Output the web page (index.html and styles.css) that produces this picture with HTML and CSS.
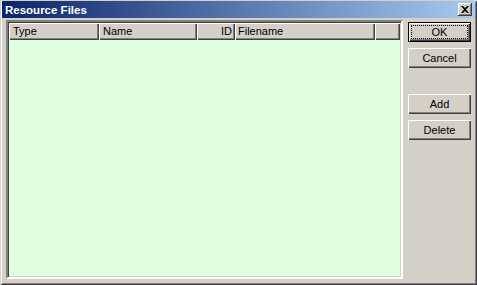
FILE: index.html
```html
<!DOCTYPE html>
<html lang="en">
<head>
  <meta charset="UTF-8" />
  <title>Resource Files</title>
  <link rel="stylesheet" href="styles.css">
</head>
<body>
<div class="window">
  <div class="titlebar">
    <span class="title">Resource Files</span>
    <span class="close">
      <svg width="8" height="7" viewBox="0 0 8 7"><path d="M0 0h2l2 2 2-2h2L5 3.5 8 7H6L4 5 2 7H0l3-3.5z" fill="#000"/></svg>
    </span>
  </div>
  <div class="content">
    <div class="list">
      <div class="header">
        <div class="col c-type">Type</div>
        <div class="col c-name">Name</div>
        <div class="col c-id">ID</div>
        <div class="col c-file">Filename</div>
        <div class="col c-rest"></div>
      </div>
      <div class="rows"></div>
    </div>
    <div class="buttons">
      <button class="btn default"><span class="focus">OK</span></button>
      <button class="btn">Cancel</button>
      <div class="spacer"></div>
      <button class="btn">Add</button>
      <button class="btn">Delete</button>
    </div>
  </div>
</div>
</body>
</html>
```

FILE: styles.css
```css
* {
  padding: 0;
  margin: 0;
  box-sizing: border-box;
}
body {
  background: #d4d0c8;
  font-family: "Liberation Sans", Arial, sans-serif;
  font-size: 11px;
}
.window {
  width: 477px;
  height: 285px;
  background: #d4d0c8;
  padding: 1px 2px 3px 2px;
  box-shadow: inset 1px 1px #d4d0c8, inset -1px -1px #404040,
    inset 2px 2px #fff, inset -2px -2px #808080;
  display: flex;
  flex-direction: column;
}
.titlebar {
  height: 17px;
  background: linear-gradient(to right, #0a246a, #a6caf0);
  display: flex;
  align-items: center;
  justify-content: space-between;
  padding: 0 3px 0 3px;
}
.title {
  color: #fff;
  font-weight: bold;
  font-size: 11.5px;
}
.close {
  width: 14px;
  height: 13px;
  background: #d4d0c8;
  box-shadow: inset -1px -1px #404040, inset 1px 1px #fff, inset -2px -2px #808080;
  display: flex;
  align-items: center;
  justify-content: center;
  padding-bottom: 1px;
}
.content {
  flex: 1;
  display: flex;
  padding: 2px 4px 3px 4px;
  gap: 5px;
}
.list {
  flex: 1;
  display: flex;
  flex-direction: column;
  background: #e0ffe0;
  border: 2px solid;
  border-color: #808080 #fff #fff #808080;
  box-shadow: inset 1px 1px #404040, inset -1px -1px #d4d0c8;
  padding: 1px;
}
.header {
  display: flex;
  height: 17px;
}
.col {
  background: #d4d0c8;
  box-shadow: inset 1px 1px #fff, inset -1px -1px #404040, inset -2px -2px #808080;
  padding: 2px 4px 0 4px;
  white-space: nowrap;
  overflow: hidden;
}
.c-type { width: 90px; }
.c-name { width: 98px; }
.c-id { width: 38px; text-align: right; padding-right: 3px; }
.c-file { width: 140px; padding-left: 3px; }
.c-rest { flex: 1; }
.rows {
  flex: 1;
}
.buttons {
  width: 63px;
  display: flex;
  flex-direction: column;
  gap: 6px;
  padding-top: 2px;
}
.spacer {
  height: 14px;
}
.btn {
  height: 20px;
  width: 63px;
  background: #d4d0c8;
  border: none;
  font-family: "Liberation Sans", Arial, sans-serif;
  font-size: 11px;
  color: #000;
  box-shadow: inset 1px 1px #fff, inset -1px -1px #404040, inset -2px -2px #808080;
}
.btn.default {
  border: 1px solid #000;
  box-shadow: inset 1px 1px #fff, inset -1px -1px #404040, inset -2px -2px #808080;
  padding: 2px;
}
.focus {
  display: block;
  height: 100%;
  border: 1px dotted #000;
  line-height: 12px;
}
```
